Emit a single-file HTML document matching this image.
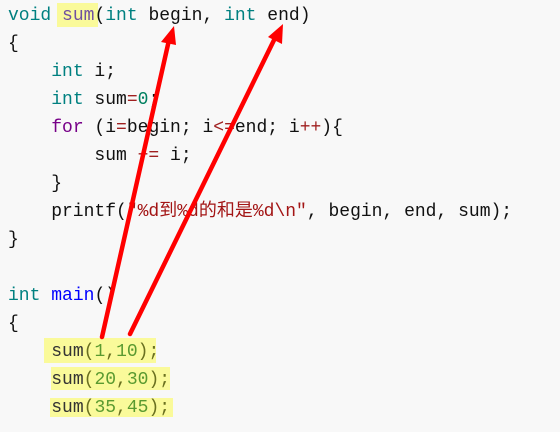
<!DOCTYPE html>
<html><head><meta charset="utf-8"><style>
html,body{margin:0;padding:0;width:560px;height:432px;overflow:hidden;background:#f8f8f8;}
.c{position:absolute;left:8px;top:1px;font-family:"Liberation Mono","Noto Sans CJK SC",monospace;font-size:18px;color:#111;}
.l{height:28px;line-height:30px;white-space:pre;}
.k{color:#008080}.p{color:#770088}.o{color:#a02020}.s{color:#a31515}.b{color:#0000ff}.n{color:#008060}
.f{color:#7050a0}.g{color:#5a9a30}.y{color:#6a7020}
.h{position:absolute;background:#fafa9a;}
</style></head><body>
<div class="h" style="left:57px;top:3px;width:41px;height:24px"></div>
<div class="h" style="left:44px;top:338px;width:112px;height:25px"></div>
<div class="h" style="left:51px;top:367px;width:119px;height:23px"></div>
<div class="h" style="left:50px;top:398px;width:123px;height:19px"></div>
<div class="c"><div class="l"><span class="k">void</span> <span class="f">sum</span>(<span class="k">int</span> begin, <span class="k">int</span> end)</div><div class="l">{</div><div class="l">    <span class="k">int</span> i;</div><div class="l">    <span class="k">int</span> sum<span class="o">=</span><span class="n">0</span>;</div><div class="l">    <span class="p">for</span> (i<span class="o">=</span>begin; i<span class="o">&lt;=</span>end; i<span class="o">++</span>){</div><div class="l">        sum <span class="o">+=</span> i;</div><div class="l">    }</div><div class="l">    printf(<span class="s">"%d到%d的和是%d\n"</span>, begin, end, sum);</div><div class="l">}</div><div class="l"> </div><div class="l"><span class="k">int</span> <span class="b">main</span>()</div><div class="l">{</div><div class="l">    <span style="color:#333">sum</span><span class="y">(</span><span class="g">1</span><span class="y">,</span><span class="g">10</span><span class="y">);</span></div><div class="l">    <span style="color:#333">sum</span><span class="y">(</span><span class="g">20</span><span class="y">,</span><span class="g">30</span><span class="y">);</span></div><div class="l">    <span style="color:#333">sum</span><span class="y">(</span><span class="g">35</span><span class="y">,</span><span class="g">45</span><span class="y">);</span></div></div>
<svg width="560" height="432" style="position:absolute;left:0;top:0">
<g stroke="#ff0000" stroke-width="4.5" stroke-linecap="round" fill="#ff0000">
<line x1="102" y1="337" x2="169" y2="40"/>
<line x1="130" y1="334" x2="276" y2="36"/>
</g>
<polygon fill="#ff0000" points="174,26 161,42 176,45"/>
<polygon fill="#ff0000" points="283,24 268,37 282,44"/>
</svg>
</body></html>
